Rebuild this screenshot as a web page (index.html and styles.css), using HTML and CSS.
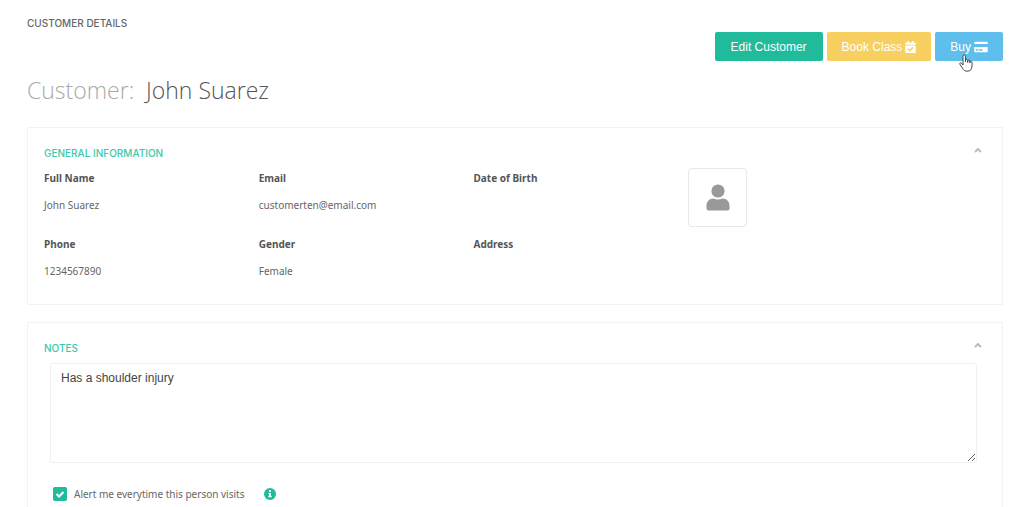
FILE: index.html
```html
<!DOCTYPE html>
<html lang="en">
<head>
    <meta charset="UTF-8">
    <meta name="viewport" content="width=device-width, initial-scale=1.0">
    <title>Customer Details</title>
    <link rel="stylesheet" href="styles.css">
</head>
<body>
    <div class="page">
        <header class="page-header">
            <p class="page-label">Customer Details</p>
            <div class="actions">
                <button type="button" class="btn btn-edit">Edit Customer</button>
                <button type="button" class="btn btn-book">Book Class
                    <svg class="icon-calendar" viewBox="0 0 448 512" aria-hidden="true"><path fill="currentColor" d="M436 160H12c-6.600 0-12-5.400-12-12v-36c0-26.500 21.500-48 48-48h48V12c0-6.600 5.400-12 12-12h40c6.600 0 12 5.400 12 12v52h128V12c0-6.600 5.400-12 12-12h40c6.600 0 12 5.400 12 12v52h48c26.500 0 48 21.500 48 48v36c0 6.600-5.400 12-12 12zM12 192h424c6.600 0 12 5.400 12 12v260c0 26.500-21.500 48-48 48H48c-26.500 0-48-21.500-48-48V204c0-6.600 5.400-12 12-12zm333 96-28-28c-5-5-12-5-17 0L195 364l-45-46c-5-5-12-5-17 0l-28 28c-5 5-5 12 0 17l82 83c5 5 12 5 17 0L345 305c5-5 5-12 0-17z"/></svg>
                </button>
                <button type="button" class="btn btn-buy">Buy
                    <svg class="icon-card" viewBox="0 0 576 512" aria-hidden="true"><path fill="currentColor" d="M0 432c0 26.500 21.500 48 48 48h480c26.500 0 48-21.500 48-48V256H0v176zm192-68c0-6.600 5.400-12 12-12h136c6.600 0 12 5.400 12 12v40c0 6.600-5.400 12-12 12H204c-6.600 0-12-5.400-12-12v-40zm-128 0c0-6.600 5.400-12 12-12h72c6.600 0 12 5.400 12 12v40c0 6.600-5.400 12-12 12H76c-6.600 0-12-5.400-12-12v-40zM576 80v48H0V80c0-26.500 21.500-48 48-48h480c26.500 0 48 21.500 48 48z"/></svg>
                    <svg class="pointer" viewBox="0 0 14 18" aria-hidden="true"><path fill="#fff" stroke="#444" stroke-width="1" stroke-linejoin="round" d="M4 11V2.200C4 .3 6.500.3 6.500 2.200V8V6.500C6.500 5 8.700 5 8.700 6.500V8.500V7C8.700 5.700 10.900 5.700 10.900 7V9V8C10.900 6.900 13 6.900 13 8.200V12C13 15.500 11 17.200 8.200 17.200C5.500 17.200 4.500 16 3.500 14.200L1 10.500C.1 9 1.800 8.200 2.700 9.300Z"/></svg>
                </button>
            </div>
        </header>

        <h1 class="title"><span class="title-label">Customer:</span> John Suarez</h1>

        <section class="panel">
            <div class="panel-head">
                <h2>General Information</h2>
                <button type="button" class="collapse" aria-label="Collapse general information">
                    <svg viewBox="0 0 8 5" aria-hidden="true"><path d="M1 4l3-3 3 3"/></svg>
                </button>
            </div>
            <div class="info">
                <dl>
                    <dt>Full Name</dt>
                    <dd>John Suarez</dd>
                </dl>
                <dl>
                    <dt>Email</dt>
                    <dd>customerten@email.com</dd>
                </dl>
                <dl>
                    <dt>Date of Birth</dt>
                    <dd></dd>
                </dl>
                <div class="avatar">
                    <svg viewBox="0 0 24 27" aria-hidden="true"><circle cx="12" cy="7" r="6.600"/><path d="M7.500 14.600Q12 16.500 16.500 14.600C21 14.600 23.500 18 23.500 22V24.500Q23.500 26.500 21.500 26.500H2.500Q.5 26.500.5 24.500V22C.5 18 3 14.600 7.500 14.600Z"/></svg>
                </div>
                <dl>
                    <dt>Phone</dt>
                    <dd>1234567890</dd>
                </dl>
                <dl>
                    <dt>Gender</dt>
                    <dd>Female</dd>
                </dl>
                <dl>
                    <dt>Address</dt>
                    <dd></dd>
                </dl>
            </div>
        </section>

        <section class="panel">
            <div class="panel-head">
                <h2 id="notesTitle">Notes</h2>
                <button type="button" class="collapse" aria-label="Collapse notes">
                    <svg viewBox="0 0 8 5" aria-hidden="true"><path d="M1 4l3-3 3 3"/></svg>
                </button>
            </div>
            <div class="notes">
                <textarea aria-labelledby="notesTitle">Has a shoulder injury</textarea>
                <div class="alert-row">
                    <input type="checkbox" id="alertVisit" checked>
                    <label for="alertVisit">Alert me everytime this person visits</label>
                    <svg class="icon-info" viewBox="0 0 12 12" aria-hidden="true"><circle cx="6" cy="6" r="6" fill="#1fbb9b"/><path fill="#fff" d="M5 2h2v2H5zM4.500 5H7v3h.6v1.200H4.400V8H5V6h-.5z"/></svg>
                </div>
            </div>
        </section>
    </div>
</body>
</html>
```
FILE: styles.css
```css
* {
    box-sizing: border-box;
}
body {
    margin: 0;
    background-color: #fff;
    color: #666;
    font-family: "Noto Sans", sans-serif;
    font-size: 10px;
    line-height: 16px;
}
h1, h2, p, dl, dd {
    margin: 0;
}
.page {
    padding: 15px 21px 0 27px;
}
.page-header {
    display: flex;
    justify-content: space-between;
    align-items: flex-start;
}
.page-label, h2 {
    font-family: Inter, sans-serif;
    font-size: 10px;
    line-height: 16px;
    font-weight: 500;
    text-transform: uppercase;
}
.actions {
    display: flex;
    gap: 4px;
    padding-top: 17px;
}
.btn {
    position: relative;
    display: flex;
    align-items: center;
    gap: 3px;
    height: 29px;
    padding: 0 15px;
    border: none;
    border-radius: 2px;
    color: #fff;
    font-family: "Liberation Sans", Arial, sans-serif;
    font-size: 12px;
    cursor: pointer;
}
.btn-edit {
    padding: 0 16px;
    background-color: #1fbb9b;
}
.btn-book {
    background-color: #f7d05f;
}
.btn-buy {
    background-color: #5fbfec;
}
.icon-calendar {
    width: 11px;
    height: 12px;
}
.icon-card {
    width: 14px;
    height: 12px;
}
.pointer {
    position: absolute;
    left: 24px;
    top: 22px;
    width: 14px;
    height: 18px;
}
.title {
    padding: 12px 0 20px;
    color: #555;
    font-family: "Open Sans", sans-serif;
    font-size: 23px;
    line-height: 34px;
    font-weight: 300;
}
.title-label {
    margin-right: 6px;
    color: #aaa;
}
.panel {
    margin-bottom: 17px;
    padding: 17px 17px 12px 16px;
    border: 1px solid #f3f3f3;
}
.panel-head {
    display: flex;
    justify-content: space-between;
}
h2 {
    color: #3dc8a9;
}
.collapse {
    display: flex;
    padding: 3px;
    border: none;
    background: none;
    cursor: pointer;
}
.collapse svg {
    width: 8px;
    height: 5px;
    fill: none;
    stroke: #bbb;
    stroke-width: 2;
}
.info {
    display: grid;
    grid-template-columns: repeat(4, 1fr);
    row-gap: 7px;
    padding: 7px 82px 0 0;
}
.info dl {
    min-height: 58px;
    padding-top: 2px;
}
dt {
    margin-bottom: 11px;
    color: #555;
    font-weight: 700;
}
.avatar {
    display: flex;
    justify-content: center;
    align-items: center;
    width: 59px;
    height: 59px;
    border: 1px solid #e8e8e8;
    border-radius: 4px;
}
.avatar svg {
    width: 24px;
    height: 27px;
    fill: #999;
}
.notes {
    padding: 7px 8px 0 6px;
}
textarea {
    display: block;
    width: 100%;
    height: 100px;
    padding: 6px 10px;
    border: 1px solid #f0f0f0;
    border-radius: 2px;
    background-color: #fff;
    color: #444;
    font-family: "Liberation Sans", Arial, sans-serif;
    font-size: 12px;
    line-height: 16px;
    resize: vertical;
}
.alert-row {
    display: flex;
    align-items: center;
    padding: 23px 3px 0;
}
.alert-row input {
    appearance: none;
    width: 14px;
    height: 14px;
    margin: 0 7px 0 0;
    border-radius: 2px;
    background: #1fbb9b url("data:image/svg+xml,%3Csvg xmlns='http://www.w3.org/2000/svg' viewBox='0 0 14 14'%3E%3Cpath d='M3.500 7l2.500 2.500 4.500-4.500' fill='none' stroke='white' stroke-width='2'/%3E%3C/svg%3E");
}
.icon-info {
    width: 12px;
    height: 12px;
    margin-left: 20px;
}
```
